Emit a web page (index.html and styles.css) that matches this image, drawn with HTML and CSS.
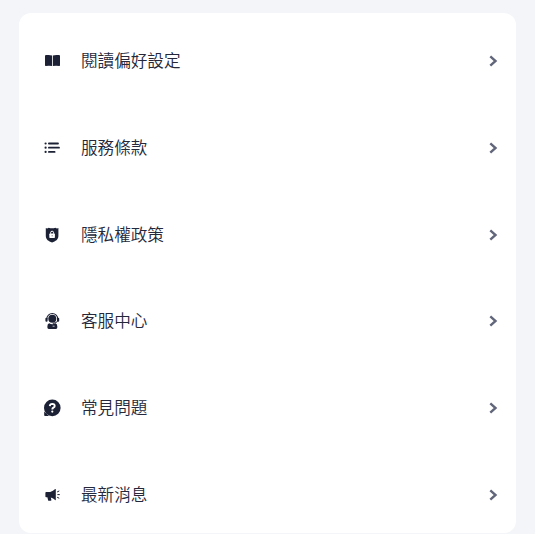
FILE: index.html
```
<!DOCTYPE html>
<html lang="zh-Hant">
<head>
    <meta charset="UTF-8">
    <meta name="viewport" content="width=device-width, initial-scale=1.0">
    <title>設定</title>
    <link rel="stylesheet" href="styles.css">
</head>
<body>
    <nav class="menu">
        <a class="menu-item">
            <svg class="icon" viewBox="0 0 18 18">
                <path d="M2 4.2Q2 3.2 3 3.1Q6.5 2.6 9.1 3.4V14Q6.5 13.4 2.8 13.9Q2 14 2 13.2ZM9.9 3.4Q12.5 2.6 16 3.1Q17 3.2 17 4.2V13.2Q17 14 16.2 13.9Q12.5 13.4 9.9 14Z"/>
            </svg>
            <span class="label">閱讀偏好設定</span>
            <svg class="arrow" viewBox="0 0 10 14"><path d="M2.3 2.3L7.5 7L2.3 11.7"/></svg>
        </a>
        <a class="menu-item">
            <svg class="icon" viewBox="0 0 18 18">
                <circle cx="2.6" cy="4.5" r="1.1"/>
                <circle cx="2.6" cy="8.7" r="1.1"/>
                <circle cx="2.6" cy="12.9" r="1.1"/>
                <path class="line" d="M5.9 4.5H15M5.9 8.7H16M5.9 12.9H11.6"/>
            </svg>
            <span class="label">服務條款</span>
            <svg class="arrow" viewBox="0 0 10 14"><path d="M2.3 2.3L7.5 7L2.3 11.7"/></svg>
        </a>
        <a class="menu-item">
            <svg class="icon" viewBox="0 0 18 18">
                <path d="M2.8 2.1Q4.3 2.8 5.7 1.8Q9.1 2.9 12.4 1.8Q13.8 2.8 15.4 2.1V9.8C15.4 13.9 12.6 15.3 9.1 16.4C5.6 15.3 2.8 13.9 2.8 9.8Z"/>
                <rect class="white" x="6.3" y="7.6" width="5.6" height="4.3" rx=".6"/>
                <path class="shackle" d="M7.6 7.7V6.7A1.5 1.5 0 0 1 10.6 6.7V7.7"/>
                <circle cx="9.1" cy="9.7" r=".5"/>
            </svg>
            <span class="label">隱私權政策</span>
            <svg class="arrow" viewBox="0 0 10 14"><path d="M2.3 2.3L7.5 7L2.3 11.7"/></svg>
        </a>
        <a class="menu-item">
            <svg class="icon" viewBox="0 0 18 18">
                <circle cx="9.3" cy="6.8" r="4"/>
                <path class="band" d="M3.8 7A5.5 5.5 0 0 1 14.8 7"/>
                <rect x="2.4" y="5.7" width="2.2" height="4" rx="1"/>
                <rect x="14" y="5.7" width="2.2" height="4" rx="1"/>
                <path class="mic" d="M14.8 9Q13.5 11.2 10.2 11.4"/>
                <path d="M6.2 11.3Q9.3 13 12.4 11.3Q14.3 12 14.3 14.2V15.6Q14.3 17 13 17H5.7Q4.4 17 4.4 15.6V14.2Q4.4 11.8 6.2 11.3Z"/>
                <path class="detail" d="M9.6 14.2H11.6"/>
            </svg>
            <span class="label">客服中心</span>
            <svg class="arrow" viewBox="0 0 10 14"><path d="M2.3 2.3L7.5 7L2.3 11.7"/></svg>
        </a>
        <a class="menu-item">
            <svg class="icon" viewBox="0 0 18 18">
                <circle cx="9.3" cy="8.9" r="8.3"/>
                <path d="M1.2 12.5V16.2Q1.2 17 2 17H6Z"/>
                <path class="question" d="M6.8 7.2Q7 4.9 9.3 4.9Q11.7 5 11.7 6.9Q11.7 8 10.4 8.7Q9.3 9.3 9.3 10.4"/>
                <circle class="white" cx="9.3" cy="12.6" r="1.1"/>
            </svg>
            <span class="label">常見問題</span>
            <svg class="arrow" viewBox="0 0 10 14"><path d="M2.3 2.3L7.5 7L2.3 11.7"/></svg>
        </a>
        <a class="menu-item">
            <svg class="icon" viewBox="0 0 18 18">
                <path d="M3.2 6H7.2Q10.2 5.2 12.2 3.1Q12.8 2.6 12.8 3.6V13.6Q12.8 14.6 12.1 13.9Q10.4 12.2 7.8 11.5L8.4 14Q8.5 14.8 7.8 14.8H5.8Q5.2 14.8 5.1 14.2L4.4 11.3H3.2Q2.4 11.3 2.4 10.5V6.8Q2.4 6 3.2 6Z"/>
                <path class="sound" d="M14.5 5.8L15.9 5.1M14.8 8.6H16.4M14.5 11.4L15.9 12.1"/>
            </svg>
            <span class="label">最新消息</span>
            <svg class="arrow" viewBox="0 0 10 14"><path d="M2.3 2.3L7.5 7L2.3 11.7"/></svg>
        </a>
    </nav>
</body>
</html>
```
FILE: styles.css
```
body {
    margin: 0;
    padding: 13px 19px 1px;
    background: #f3f5f9;
    font-family: "Noto Sans CJK TC", sans-serif;
    color: #24283a;
}
.menu {
    box-sizing: border-box;
    height: 520px;
    padding-top: 10px;
    display: flex;
    flex-direction: column;
    gap: 10.8px;
    background: #fff;
    border-radius: 12px;
}
.menu-item {
    display: flex;
    align-items: center;
    height: 76px;
    flex-shrink: 0;
    padding: 0 18px 0 24px;
}
.icon {
    width: 18px;
    height: 18px;
    margin-right: 20px;
    fill: #1c2135;
}
.label {
    flex: 1;
    padding-bottom: 2px;
    font-size: 16.6px;
    line-height: 24px;
    font-weight: 350;
}
.arrow {
    width: 10px;
    height: 14px;
}
.arrow path {
    fill: none;
    stroke: #62667b;
    stroke-width: 2.4;
}
.line,
.band,
.mic,
.sound {
    fill: none;
    stroke: #1c2135;
    stroke-linecap: round;
}
.line {
    stroke-width: 1.8;
}
.band {
    stroke-width: 1.1;
}
.mic,
.sound {
    stroke-width: 1;
}
.white {
    fill: #fff;
}
.shackle,
.question,
.detail {
    fill: none;
    stroke: #fff;
}
.shackle {
    stroke-width: 1;
}
.question {
    stroke-width: 1.9;
}
.detail {
    stroke-width: .7;
}
```
